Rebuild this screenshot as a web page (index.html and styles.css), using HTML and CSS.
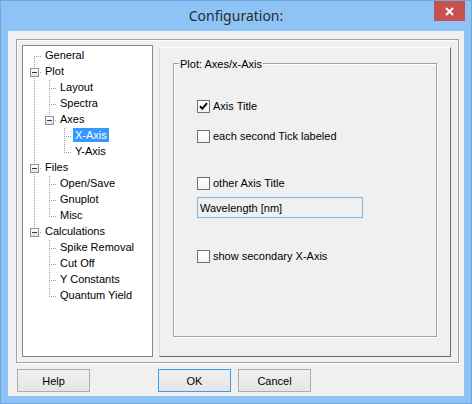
FILE: index.html
```html
<!DOCTYPE html>
<html lang="en">
<head>
    <meta charset="UTF-8">
    <title>Configuration:</title>
    <link rel="stylesheet" href="styles.css">
</head>
<body>
<div class="window">
    <div class="titlebar">
        <span></span>
        <div class="title">Configuration:</div>
        <button class="close" type="button">
            <svg width="9" height="9" viewBox="0 0 9 9"><path d="M1 1L8 8M8 1L1 8" stroke="#fff" stroke-width="2" fill="none"/></svg>
        </button>
    </div>
    <div class="client">
        <div class="frame">
            <div class="tree">
                <ul class="root">
                    <li><div class="row"><span class="label">General</span></div></li>
                    <li><div class="row"><span class="toggle"></span><span class="label">Plot</span></div>
                        <ul>
                            <li><div class="row"><span class="label">Layout</span></div></li>
                            <li><div class="row"><span class="label">Spectra</span></div></li>
                            <li><div class="row"><span class="toggle"></span><span class="label">Axes</span></div>
                                <ul>
                                    <li><div class="row"><span class="label selected">X-Axis</span></div></li>
                                    <li><div class="row"><span class="label">Y-Axis</span></div></li>
                                </ul>
                            </li>
                        </ul>
                    </li>
                    <li><div class="row"><span class="toggle"></span><span class="label">Files</span></div>
                        <ul>
                            <li><div class="row"><span class="label">Open/Save</span></div></li>
                            <li><div class="row"><span class="label">Gnuplot</span></div></li>
                            <li><div class="row"><span class="label">Misc</span></div></li>
                        </ul>
                    </li>
                    <li><div class="row"><span class="toggle"></span><span class="label">Calculations</span></div>
                        <ul>
                            <li><div class="row"><span class="label">Spike Removal</span></div></li>
                            <li><div class="row"><span class="label">Cut Off</span></div></li>
                            <li><div class="row"><span class="label">Y Constants</span></div></li>
                            <li><div class="row"><span class="label">Quantum Yield</span></div></li>
                        </ul>
                    </li>
                </ul>
            </div>
            <div class="page">
                <div class="group">
                    <span class="group-title">Plot: Axes/x-Axis</span>
                    <label class="check axis-title">
                        <span class="box"><svg width="11" height="11" viewBox="0 0 11 11"><path d="M2 5.2L4.3 7.8L9 2.2" stroke="#000" stroke-width="1.9" fill="none"/></svg></span>
                        Axis Title
                    </label>
                    <label class="check tick-labeled"><span class="box"></span>each second Tick labeled</label>
                    <label class="check other-title"><span class="box"></span>other Axis Title</label>
                    <input class="field" type="text" value="Wavelength [nm]">
                    <label class="check secondary"><span class="box"></span>show secondary X-Axis</label>
                </div>
            </div>
        </div>
        <div class="buttons">
            <button class="btn" type="button">Help</button>
            <button class="btn default ok" type="button">OK</button>
            <button class="btn" type="button">Cancel</button>
        </div>
    </div>
</div>
</body>
</html>
```

FILE: styles.css
```css
body {
    margin: 0;
    font-family: "Liberation Sans", Arial, sans-serif;
    font-size: 11px;
    color: #000;
}
.window {
    width: 472px;
    height: 404px;
    box-sizing: border-box;
    border: 1px solid #6fa7de;
    background-color: #8dc4f5;
    padding: 0 7px 7px 7px;
    display: flex;
    flex-direction: column;
}
.titlebar {
    height: 30px;
    margin: 0 -7px;
    display: grid;
    grid-template-columns: 1fr auto 1fr;
}
.title {
    font-family: "Noto Sans", sans-serif;
    font-size: 14px;
    line-height: 30px;
    color: #2b2b2b;
}
.close {
    justify-self: end;
    width: 31px;
    height: 20px;
    margin-right: 6px;
    border: none;
    padding: 0;
    background-color: #c75050;
    display: flex;
    align-items: center;
    justify-content: center;
}
.client {
    flex: 1;
    background-color: #f0f0f0;
    padding: 8px 5px 4px 8px;
    display: flex;
    flex-direction: column;
}
.frame {
    height: 324px;
    box-sizing: border-box;
    border: 1px solid #a0a0a0;
    box-shadow: inset 1px 1px 0 #fff, 1px 1px 0 #fff;
    padding: 5px 7px 5px 5px;
    display: flex;
    gap: 6px;
}

/* tree */
.tree {
    width: 131px;
    box-sizing: border-box;
    border: 1px solid #828790;
    background-color: #fff;
    padding-top: 2px;
}
.tree ul {
    list-style: none;
    margin: 0;
    padding: 0 0 0 15px;
}
.tree ul.root {
    padding-left: 0;
}
.tree li {
    position: relative;
}
.tree li::before {
    content: "";
    position: absolute;
    left: 11px;
    top: 0;
    bottom: 0;
    width: 1px;
    background: repeating-linear-gradient(to bottom, #a0a0a0 0 1px, transparent 1px 2px);
}
.tree li:last-child::before {
    bottom: auto;
    height: 8px;
}
.tree .root > li:first-child::before {
    top: 8px;
}
.row {
    position: relative;
    height: 16px;
    padding-left: 20px;
    display: flex;
    align-items: flex-start;
}
.row::before {
    content: "";
    position: absolute;
    left: 11px;
    top: 8px;
    width: 8px;
    height: 1px;
    background: repeating-linear-gradient(to right, #a0a0a0 0 1px, transparent 1px 2px);
}
.toggle {
    position: absolute;
    left: 7px;
    top: 4px;
    width: 9px;
    height: 9px;
    box-sizing: border-box;
    border: 1px solid #919191;
    background: linear-gradient(#fff, #e3e3e3);
    z-index: 1;
}
.toggle::after {
    content: "";
    position: absolute;
    left: 1px;
    top: 3px;
    width: 5px;
    height: 1px;
    background-color: #1e3287;
}
.label {
    line-height: 14px;
    padding: 0 2px;
    white-space: nowrap;
}
.label.selected {
    background-color: #3399ff;
    color: #fff;
}

/* page */
.page {
    flex: 1;
    margin-top: 2px;
    border-top: 1px solid #fff;
    border-left: 1px solid #dcdcdc;
    border-right: 1px solid #6b6b6b;
    border-bottom: 1px solid #6b6b6b;
    padding: 15px 13px 19px 13px;
    display: flex;
}
.group {
    flex: 1;
    border: 1px solid #a0a0a0;
    box-shadow: inset 1px 1px 0 #fff, 1px 1px 0 #fff;
    padding-left: 23px;
    display: flex;
    flex-direction: column;
    align-items: flex-start;
}
.group-title {
    margin: -6px 0 0 -18px;
    padding: 0 1px;
    line-height: 13px;
    background-color: #f0f0f0;
}
.check {
    display: flex;
    align-items: center;
    gap: 3px;
    height: 13px;
    line-height: 13px;
    white-space: nowrap;
}
.box {
    width: 13px;
    height: 13px;
    box-sizing: border-box;
    border: 1px solid #707070;
    background: linear-gradient(#fff, #f4f4f4);
    display: flex;
}
.axis-title {
    margin-top: 29px;
}
.tick-labeled {
    margin-top: 17px;
}
.other-title {
    margin-top: 34px;
}
.field {
    margin-top: 7px;
    width: 166px;
    height: 21px;
    box-sizing: border-box;
    border: 1px solid #7eb4ea;
    background-color: #f0f0f0;
    padding: 0 2px;
    font-family: inherit;
    font-size: 11px;
    outline: none;
}
.secondary {
    margin-top: 32px;
}

/* buttons */
.buttons {
    margin-top: 6px;
    padding-left: 1px;
    display: flex;
    gap: 7px;
}
.btn {
    width: 73px;
    height: 23px;
    border: 1px solid #acacac;
    background: linear-gradient(#f0f0f0, #e5e5e5);
    font-family: inherit;
    font-size: 11px;
    color: #000;
    padding: 0;
}
.btn.default {
    border-color: #3c9bef;
}
.btn.ok {
    margin-left: 61px;
}
```
